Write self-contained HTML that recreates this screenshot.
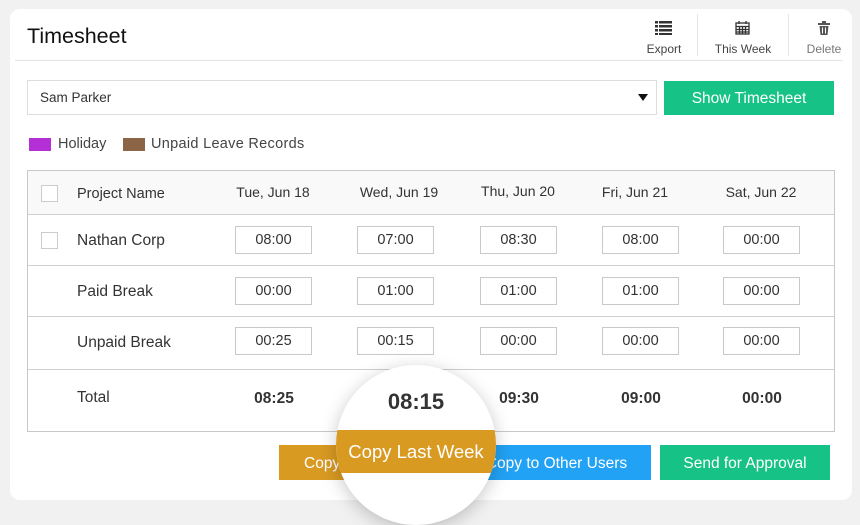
<!DOCTYPE html>
<html><head><style>
*{margin:0;padding:0;box-sizing:border-box}
body{width:860px;height:510px;background:#f1f1f1;font-family:"Liberation Sans",sans-serif;color:#333;position:relative;overflow:hidden}
.a{position:absolute}
.card{left:10px;top:9px;width:842px;height:491px;background:#fff;border-radius:10px}
.inp{position:absolute;width:77px;height:28px;border:1px solid #c9c9c9;font-size:14.5px;text-align:center;line-height:26px;color:#333}
.hl{position:absolute;left:28px;width:806px;height:1px;background:#d0d0d0}
.dh{position:absolute;font-size:14px;color:#333;text-align:center;width:120px}
.lbl{position:absolute;left:77px;font-size:15.5px;color:#333}
.cb{position:absolute;left:41px;width:17px;height:17px;border:1px solid #ccc;background:#fff}
.tot{position:absolute;top:390px;width:120px;text-align:center;font-size:15.5px;font-weight:bold;color:#333}
.btn{position:absolute;top:445px;height:35px;color:#fff;font-size:15.5px;line-height:37px;text-align:center}
.ic{position:absolute;top:42px;font-size:12px;color:#444;text-align:center}
</style></head><body>
<div class="a card"></div>
<div class="a" style="left:27px;top:24px;font-size:21.5px;color:#111">Timesheet</div>
<div class="a" style="left:15px;top:60px;width:828px;height:1px;background:#e3e3e3"></div>
<div class="a" style="left:697px;top:14px;width:1px;height:42px;background:#e6e6e6"></div>
<div class="a" style="left:788px;top:14px;width:1px;height:42px;background:#e6e6e6"></div>
<svg class="a" style="left:655px;top:21px" width="17" height="14" viewBox="0 0 17 14"><g fill="#333"><rect x="0" y="0" width="3" height="2.5"/><rect x="4" y="0" width="13" height="2.5"/><rect x="0" y="4" width="3" height="2.5"/><rect x="4" y="4" width="13" height="2.5"/><rect x="0" y="8" width="3" height="2.5"/><rect x="4" y="8" width="13" height="2.5"/><rect x="0" y="12" width="3" height="2"/><rect x="4" y="12" width="13" height="2"/></g></svg>
<div class="ic" style="left:640px;width:48px">Export</div>
<svg class="a" style="left:735px;top:20px" width="15" height="15" viewBox="0 0 15 15"><g fill="none" stroke="#333" stroke-width="1.3"><rect x="1" y="3" width="13" height="11"/><path d="M1 6.5h13M1 9.5h13M1 12h13M4.5 6.5v7.5M7.5 6.5v7.5M10.5 6.5v7.5M4 1v3M11 1v3"/></g></svg>
<div class="ic" style="left:706px;width:74px">This Week</div>
<svg class="a" style="left:818px;top:21px" width="12" height="14" viewBox="0 0 12 14"><g fill="#555"><rect x="0" y="2" width="12" height="2"/><rect x="4" y="0" width="4" height="2"/><path d="M1.5 5h9l-1 9h-7z"/></g><path d="M4.5 6.5v6M7.5 6.5v6" stroke="#fff" stroke-width="1"/></svg>
<div class="ic" style="left:800px;width:48px;color:#777">Delete</div>
<div class="a" style="left:27px;top:80px;width:630px;height:35px;border:1px solid #ddd"></div>
<div class="a" style="left:40px;top:90px;font-size:13.5px;color:#333">Sam Parker</div>
<div class="a" style="left:638px;top:94px;width:0;height:0;border-left:5px solid transparent;border-right:5px solid transparent;border-top:7px solid #111"></div>
<div class="a" style="left:664px;top:81px;width:170px;height:34px;background:#16c286;color:#fff;font-size:15.5px;text-align:center;line-height:35px">Show Timesheet</div>
<div class="a" style="left:29px;top:138px;width:22px;height:13px;background:#b52fd6"></div>
<div class="a" style="left:58px;top:136px;font-size:14.5px;color:#444">Holiday</div>
<div class="a" style="left:123px;top:138px;width:22px;height:13px;background:#8c6446"></div>
<div class="a" style="left:151px;top:136px;font-size:14.5px;color:#444;letter-spacing:0.3px">Unpaid Leave Records</div>
<div class="a" style="left:27px;top:170px;width:808px;height:262px;border:1px solid #c8c8c8;background:#fff"></div>
<div class="a" style="left:28px;top:171px;width:806px;height:43px;background:#f9f9f9"></div>
<div class="hl" style="top:214px"></div><div class="hl" style="top:265px"></div><div class="hl" style="top:316px"></div><div class="hl" style="top:369px"></div>
<div class="cb" style="top:185px"></div><div class="cb" style="top:232px"></div>
<div class="lbl" style="top:186px;font-size:14.5px">Project Name</div>
<div class="dh" style="left:213px;top:184px">Tue, Jun 18</div>
<div class="dh" style="left:339px;top:184px">Wed, Jun 19</div>
<div class="dh" style="left:458px;top:183px">Thu, Jun 20</div>
<div class="dh" style="left:575px;top:184px">Fri, Jun 21</div>
<div class="dh" style="left:701px;top:184px">Sat, Jun 22</div>
<div class="lbl" style="top:232px">Nathan Corp</div>
<div class="lbl" style="top:283px">Paid Break</div>
<div class="lbl" style="top:334px">Unpaid Break</div>
<div class="lbl" style="top:389px">Total</div>
<div class="inp" style="left:235px;top:226px">08:00</div><div class="inp" style="left:357px;top:226px">07:00</div><div class="inp" style="left:480px;top:226px">08:30</div><div class="inp" style="left:602px;top:226px">08:00</div><div class="inp" style="left:723px;top:226px">00:00</div>
<div class="inp" style="left:235px;top:277px">00:00</div><div class="inp" style="left:357px;top:277px">01:00</div><div class="inp" style="left:480px;top:277px">01:00</div><div class="inp" style="left:602px;top:277px">01:00</div><div class="inp" style="left:723px;top:277px">00:00</div>
<div class="inp" style="left:235px;top:327px">00:25</div><div class="inp" style="left:357px;top:327px">00:15</div><div class="inp" style="left:480px;top:327px">00:00</div><div class="inp" style="left:602px;top:327px">00:00</div><div class="inp" style="left:723px;top:327px">00:00</div>
<div class="tot" style="left:214px">08:25</div>
<div class="tot" style="left:459px">09:30</div>
<div class="tot" style="left:581px">09:00</div>
<div class="tot" style="left:702px">00:00</div>
<div class="btn" style="left:279px;width:180px;background:#d99a22;text-align:left;padding-left:25px">Copy Last Week</div>
<div class="btn" style="left:440px;width:211px;background:#22a2f5;padding-left:22px">Copy to Other Users</div>
<div class="btn" style="left:660px;width:170px;background:#16c286">Send for Approval</div>
<div class="a" style="left:336px;top:365px;width:160px;height:160px;border-radius:50%;background:#fff;box-shadow:0 4px 18px rgba(0,0,0,0.22);overflow:hidden">
<div class="a" style="left:0;top:24px;width:160px;text-align:center;font-size:22px;font-weight:bold;color:#333">08:15</div>
<div class="a" style="left:0;top:65px;width:160px;height:43px;background:#d99a22;color:#fff;font-size:18.5px;text-align:center;line-height:43px">Copy Last Week</div>
</div>
</body></html>
